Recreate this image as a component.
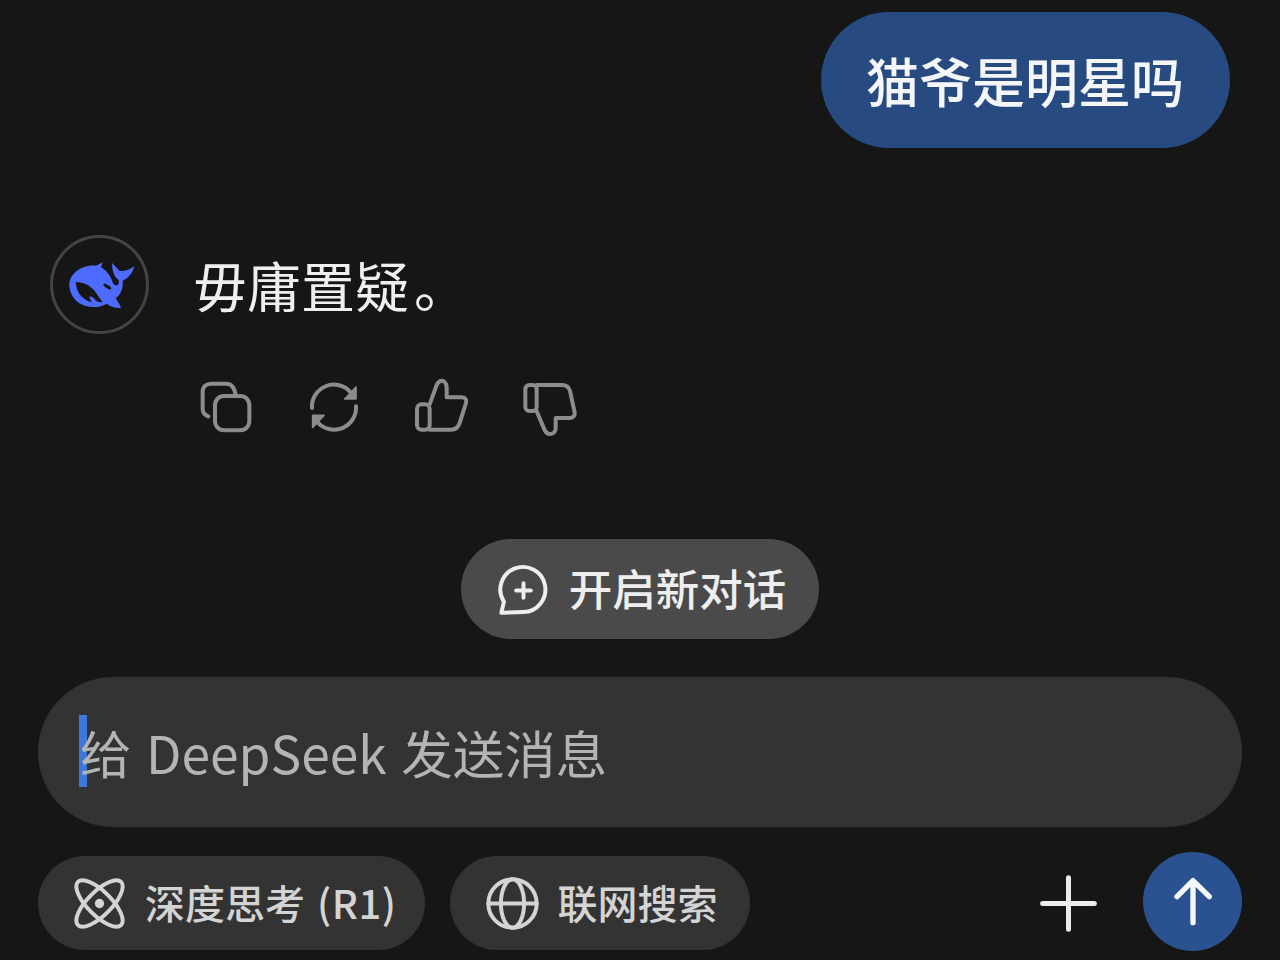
<script>
  const actions = ['copy', 'regenerate', 'like', 'dislike'];
</script>

<main class="page">
  <div class="user-row">
    <div class="bubble">猫爷是明星吗</div>
  </div>

  <div class="answer">
    <div class="avatar">
      <svg class="whale" viewBox="60 45 297 297" width="99" height="99" aria-hidden="true">
        <path
          fill="#4d6bfe"
          d="M118 196C117 160 158 132 198 137L218 127L213 142C232 152 245 174 249 190C257 202 270 196 266 180C252 172 246 150 246 129C254 136 262 146 268 152C282 155 296 151 313 139C307 162 292 177 278 182C281 206 270 226 257 234C264 247 270 254 273 264C254 265 240 259 230 251C206 266 170 264 147 249C129 237 119 218 118 196Z"
        />
        <path
          fill="#161616"
          d="M137 186C160 186 182 196 198 218C205 228 212 238 218 246C208 249 200 245 194 238C190 232 184 228 178 230C180 236 182 241 185 247C165 241 150 228 143 212C140 204 138 194 137 186Z"
        />
        <ellipse cx="232" cy="200" rx="14" ry="5" transform="rotate(35 232 200)" fill="#161616" />
      </svg>
    </div>
    <p class="reply">毋庸置疑<span class="stop">。</span></p>
  </div>

  <div class="actions">
    <svg class="action" viewBox="47 52 180 180" aria-label={actions[0]}>
      <path d="M84 170C73 166 67 158 67 148V96C67 81 78 72 92 72H138C151 72 162 80 166 106" />
      <rect x="104" y="109" width="103" height="103" rx="27" />
    </svg>
    <svg class="action" viewBox="370 52 180 180" aria-label={actions[1]}>
      <path d="M394 145A66 66 0 0 1 510 98" />
      <path class="solid" d="M526 82V118H492Z" />
      <path d="M526 140A66 66 0 0 1 410 187" />
      <path class="solid" d="M396 203V167H430Z" />
    </svg>
    <svg class="action" viewBox="695 52 180 180" aria-label={actions[2]}>
      <rect x="710" y="134" width="38" height="76" rx="14" />
      <path d="M748 210H812C828 210 834 202 838 190L857 130C860 119 854 113 844 113H799V82C798 70 791 62 783 63C776 64 772 69 769 76L748 134" />
    </svg>
    <svg class="action" viewBox="1018 52 180 180" aria-label={actions[3]}>
      <rect x="1034" y="76" width="34" height="78" rx="12" />
      <path d="M1068 76H1144C1157 76 1165 83 1168 94L1182 158C1184 168 1177 175 1167 175H1125V208C1123 219 1116 223 1108 223C1100 223 1095 218 1091 209L1068 155" />
    </svg>
  </div>

  <button class="new-chat" type="button">
    <svg class="icon" viewBox="140 95 160 160" aria-hidden="true">
      <path d="M153 245L161 212A68 68 0 1 1 220 243Z" />
      <path d="M220 156V200M198 178H242" />
    </svg>
    <span class="label">开启新对话</span>
  </button>

  <div class="input">
    <span class="caret"></span>
    <span class="placeholder">给 DeepSeek 发送消息</span>
  </div>

  <div class="toolbar">
    <button class="chip" type="button">
      <svg class="icon" viewBox="130 108 160 160" aria-hidden="true">
        <ellipse cx="210" cy="188" rx="92" ry="36" transform="rotate(45 210 188)" />
        <ellipse cx="210" cy="188" rx="92" ry="36" transform="rotate(-45 210 188)" />
        <circle class="dot" cx="210" cy="188" r="14" />
      </svg>
      <span class="label">深度思考 <span class="model">(R1)</span></span>
    </button>
    <button class="chip web" type="button">
      <svg class="icon" viewBox="138 108 160 160" aria-hidden="true">
        <circle cx="218" cy="188" r="73" />
        <ellipse cx="218" cy="188" rx="35" ry="73" />
        <path d="M145 188H291" />
      </svg>
      <span class="label">联网搜索</span>
    </button>
    <svg class="plus" viewBox="0 0 171 171" aria-label="add">
      <path d="M85.500 8V163M8 85.500H163" />
    </svg>
    <button class="send" type="button" aria-label="send">
      <svg viewBox="368 38 297 297" width="99" height="99">
        <path d="M518 126V250M470 172L518 124L567 172" />
      </svg>
    </button>
  </div>
</main>

<style>
  :global(body) {
    margin: 0;
    background: #161616;
  }

  .page {
    box-sizing: border-box;
    width: 1280px;
    height: 960px;
    padding: 12px 38px 0;
    display: flex;
    flex-direction: column;
    overflow: hidden;
    background: #161616;
    font-family: "Noto Sans CJK SC", "Noto Sans", sans-serif;
    font-weight: 500;
  }

  .user-row {
    display: flex;
    justify-content: flex-end;
    padding-right: 12px;
  }

  .bubble {
    height: 136px;
    padding: 0 46px 0 45px;
    border-radius: 68px;
    background: #274a80;
    color: #f4f6fa;
    font-size: 53px;
    line-height: 136px;
  }

  .answer {
    display: flex;
    align-items: center;
    gap: 44px;
    margin-top: 87px;
    padding-left: 12px;
  }

  .avatar {
    box-sizing: border-box;
    width: 99px;
    height: 99px;
    border: 3px solid #444;
    border-radius: 50%;
    position: relative;
  }

  .whale {
    position: absolute;
    top: -3px;
    left: -3px;
  }

  .reply {
    margin: 0;
    color: #efefef;
    font-size: 54px;
    font-weight: 400;
    line-height: 99px;
  }

  .stop {
    margin-left: 5px;
  }

  .actions {
    display: flex;
    gap: 48px;
    margin-top: 43px;
    padding-left: 158px;
  }

  .action {
    width: 60px;
    height: 60px;
    fill: none;
    stroke: #8c8c8c;
    stroke-width: 12;
    stroke-linecap: round;
    stroke-linejoin: round;
  }

  .action .solid {
    fill: #8c8c8c;
    stroke-width: 5;
  }

  button {
    border: 0;
    font: inherit;
    padding: 0;
  }

  .new-chat {
    align-self: center;
    display: flex;
    align-items: center;
    gap: 19px;
    height: 100px;
    margin-top: 102px;
    padding: 0 33px 0 36px;
    border-radius: 50px;
    background: #4a4a4a;
    color: #eee;
    font-size: 43.500px;
  }

  .label {
    position: relative;
    top: -2px;
  }

  .icon {
    width: 53px;
    height: 53px;
    flex: none;
    fill: none;
    stroke: currentColor;
    stroke-width: 12;
    stroke-linecap: round;
    stroke-linejoin: round;
  }

  .dot {
    fill: currentColor;
    stroke: none;
  }

  .input {
    display: flex;
    align-items: center;
    height: 150px;
    margin-top: 38px;
    padding-left: 42px;
    border-radius: 75px;
    background: #333;
    position: relative;
  }

  .caret {
    position: absolute;
    left: 41px;
    top: 38px;
    width: 8px;
    height: 72px;
    background: #3f78dc;
  }

  .placeholder {
    color: #b4b4b4;
    font-size: 51.500px;
    font-weight: 400;
    word-spacing: 3px;
    position: relative;
    top: -1px;
  }

  .toolbar {
    display: flex;
    align-items: center;
    margin-top: 25px;
    height: 99px;
  }

  .chip {
    display: flex;
    align-items: center;
    gap: 19px;
    height: 94px;
    margin-top: 3px;
    margin-right: 25px;
    padding: 0 28px 0 35px;
    border-radius: 47px;
    background: #333;
    color: #d4d4d4;
    font-size: 40px;
    white-space: nowrap;
  }

  .chip .label {
    top: -1px;
  }

  .chip.web {
    padding: 0 32px 0 36px;
  }

  .model {
    margin-left: 3px;
    letter-spacing: 0.500px;
  }

  .plus {
    width: 57px;
    height: 57px;
    margin-left: auto;
    margin-top: 3px;
    fill: none;
    stroke: #ececec;
    stroke-width: 15;
    stroke-linecap: round;
  }

  .send {
    width: 99px;
    height: 99px;
    margin-left: 46px;
    border-radius: 50%;
    background: #2a5290;
  }

  .send svg {
    display: block;
    fill: none;
    stroke: #f6f8fb;
    stroke-width: 16;
    stroke-linecap: round;
    stroke-linejoin: round;
  }
</style>
